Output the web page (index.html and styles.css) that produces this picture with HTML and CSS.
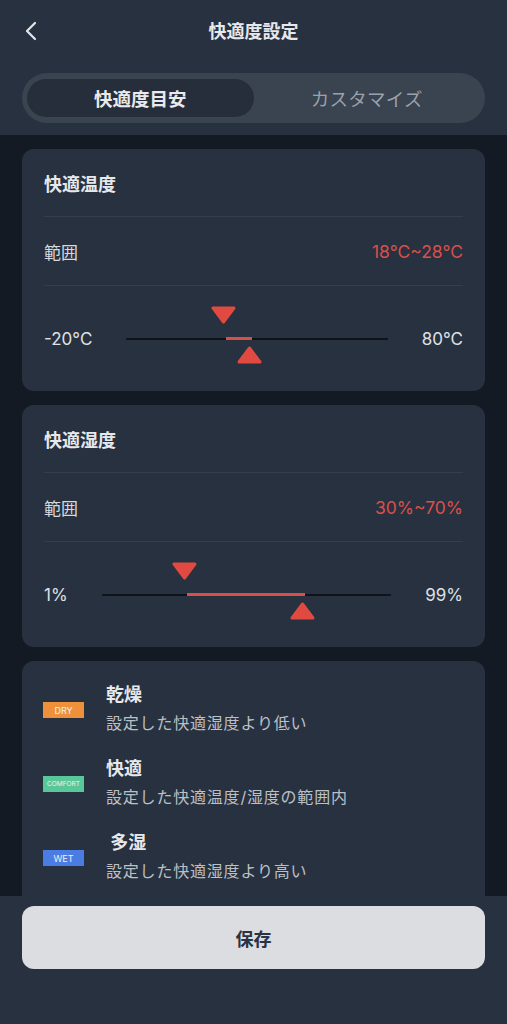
FILE: index.html
```html
<!DOCTYPE html>
<html lang="ja">
<head>
  <meta charset="UTF-8" />
  <meta name="viewport" content="width=device-width, initial-scale=1" />
  <title>快適度設定</title>
  <link rel="stylesheet" href="styles.css">
</head>
<body>
  <div class="app">
    <header class="header">
      <div class="topbar">
        <button class="back" aria-label="戻る">
          <svg width="14" height="20" viewBox="0 0 14 20"><polyline points="11,2 3,10 11,18" fill="none" stroke="#e3e6ea" stroke-width="2.2" stroke-linecap="round" stroke-linejoin="round"/></svg>
        </button>
        <h1>快適度設定</h1>
      </div>
      <div class="segment">
        <div class="segment-item active">快適度目安</div>
        <div class="segment-item">カスタマイズ</div>
      </div>
    </header>

    <main class="content">
      <section class="card">
        <div class="card-title">快適温度</div>
        <div class="row">
          <span>範囲</span>
          <span class="range-value">18°C~28°C</span>
        </div>
        <div class="slider">
          <span class="slider-label">-20°C</span>
          <div class="track">
            <div class="fill" style="left:38%;width:10%"></div>
            <svg class="thumb thumb-min" style="left:38%" viewBox="0 0 27 18"><polygon points="3,2 24,2 13.5,16" /></svg>
            <svg class="thumb thumb-max" style="left:48%" viewBox="0 0 27 18"><polygon points="13.5,2 24,16 3,16" /></svg>
          </div>
          <span class="slider-label">80°C</span>
        </div>
      </section>

      <section class="card">
        <div class="card-title">快適湿度</div>
        <div class="row">
          <span>範囲</span>
          <span class="range-value">30%~70%</span>
        </div>
        <div class="slider">
          <span class="slider-label">1%</span>
          <div class="track">
            <div class="fill" style="left:29.6%;width:40.8%"></div>
            <svg class="thumb thumb-min" style="left:29.6%" viewBox="0 0 27 18"><polygon points="3,2 24,2 13.5,16" /></svg>
            <svg class="thumb thumb-max" style="left:70.4%" viewBox="0 0 27 18"><polygon points="13.5,2 24,16 3,16" /></svg>
          </div>
          <span class="slider-label">99%</span>
        </div>
      </section>

      <section class="card legend">
        <div class="legend-item">
          <span class="badge badge-dry">DRY</span>
          <div>
            <div class="legend-title">乾燥</div>
            <div class="legend-desc">設定した快適湿度より低い</div>
          </div>
        </div>
        <div class="legend-item">
          <span class="badge badge-comfort">COMFORT</span>
          <div>
            <div class="legend-title">快適</div>
            <div class="legend-desc">設定した快適温度/湿度の範囲内</div>
          </div>
        </div>
        <div class="legend-item">
          <span class="badge badge-wet">WET</span>
          <div>
            <div class="legend-title">&nbsp;多湿</div>
            <div class="legend-desc">設定した快適湿度より高い</div>
          </div>
        </div>
      </section>
    </main>

    <footer class="footer">
      <button class="save">保存</button>
    </footer>
  </div>
</body>
</html>
```

FILE: styles.css
```css
* {
  box-sizing: border-box;
}
body {
  margin: 0;
  font-family: 'Inter', 'Noto Sans CJK JP', sans-serif;
  background: #141a24;
  color: #e4e6ea;
}
.app {
  display: flex;
  flex-direction: column;
  height: 1024px;
  overflow: hidden;
}

/* ヘッダー */
.header {
  background: #283140;
  padding: 0 22px 12px;
}
.topbar {
  position: relative;
  height: 60px;
  display: flex;
  align-items: center;
  justify-content: center;
}
.topbar h1 {
  margin: 0;
  font-size: 18px;
  font-weight: 700;
  color: #e6e8eb;
}
.back {
  position: absolute;
  left: 2px;
  top: 21px;
  background: none;
  border: none;
  padding: 0;
  width: 14px;
  height: 20px;
  cursor: pointer;
}
.segment {
  margin-top: 13px;
  height: 50px;
  display: flex;
  padding: 6px 5px;
  background: #3a4350;
  border-radius: 25px;
}
.segment-item {
  flex: 1;
  display: flex;
  align-items: center;
  justify-content: center;
  font-size: 18.5px;
  letter-spacing: 0.3px;
  color: #9ba1aa;
  border-radius: 19px;
}
.segment-item.active {
  background: #262e3b;
  color: #e8eaed;
  font-weight: 700;
  letter-spacing: 0;
}

/* コンテンツ */
.content {
  flex: 1;
  overflow: hidden;
  padding: 14px 22px 0;
  display: flex;
  flex-direction: column;
  gap: 14px;
}
.card {
  flex-shrink: 0;
  background: #283140;
  border-radius: 12px;
  padding: 0 22px;
}
.card-title {
  height: 68px;
  display: flex;
  align-items: center;
  font-size: 18px;
  font-weight: 700;
  color: #e6e8eb;
  border-bottom: 1px solid #353e4c;
}
.row {
  height: 69px;
  display: flex;
  align-items: center;
  justify-content: space-between;
  font-size: 17px;
  color: #d6d9dd;
  border-bottom: 1px solid #353e4c;
}
.range-value {
  color: #d9504a;
  font-size: 17.5px;
}
.slider {
  height: 105px;
  display: flex;
  align-items: center;
  font-size: 17px;
  color: #dfe1e5;
}
.track {
  position: relative;
  flex: 1;
  height: 2px;
  margin: 0 34px;
  background: #0f141c;
}
.fill {
  position: absolute;
  top: -1px;
  height: 3px;
  background: #d9504a;
}
.thumb {
  position: absolute;
  width: 27px;
  height: 18px;
  margin-left: -16px;
  fill: #e04a40;
  stroke: #e04a40;
  stroke-width: 3;
  stroke-linejoin: round;
}
.thumb-min {
  top: -32px;
}
.thumb-max {
  top: 8px;
}

/* 凡例 */
.legend {
  padding-top: 21px;
  padding-bottom: 40px;
  display: flex;
  flex-direction: column;
  gap: 18px;
}
.legend-item {
  display: flex;
  align-items: center;
}
.badge {
  width: 41px;
  height: 16px;
  margin: 0 22px 0 -1px;
  display: flex;
  align-items: center;
  justify-content: center;
  font-size: 9px;
  color: #f4f1ec;
}
.badge-dry {
  background: #ef913b;
}
.badge-comfort {
  background: #5ac79a;
  font-size: 6.5px;
}
.badge-wet {
  background: #4a7ce4;
}
.legend-title {
  font-size: 18px;
  line-height: 26px;
  font-weight: 700;
  color: #e6e8eb;
}
.legend-desc {
  font-size: 16px;
  letter-spacing: 0.8px;
  line-height: 30px;
  color: #bcc0c6;
}

/* フッター */
.footer {
  height: 128px;
  flex-shrink: 0;
  background: #283140;
  padding: 10px 22px 0;
}
.save {
  width: 100%;
  height: 63px;
  border: none;
  border-radius: 12px;
  background: #dcdde0;
  color: #2b3341;
  font-family: 'Inter', 'Noto Sans CJK JP', sans-serif;
  font-size: 18px;
  font-weight: 700;
  cursor: pointer;
}
```
